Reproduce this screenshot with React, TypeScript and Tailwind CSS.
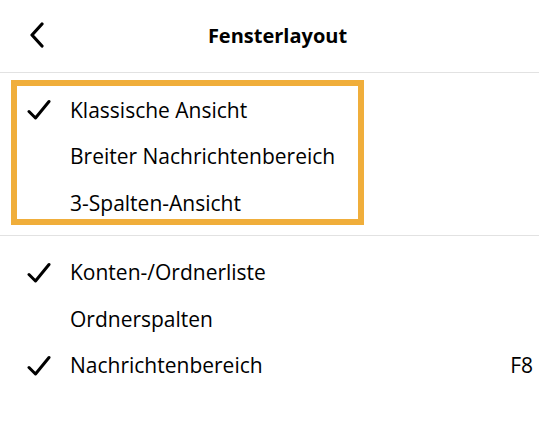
import React from "react";

const Check = () => (
  <svg width="24" height="24" viewBox="0 0 24 24" className="shrink-0">
    <path d="M2 13.5 L8.5 20 L22 3.5" fill="none" stroke="#000" strokeWidth="3" strokeLinecap="round" strokeLinejoin="round" />
  </svg>
);

function Item({ label, checked, shortcut }: { label: string; checked?: boolean; shortcut?: string }) {
  return (
    <div className="flex h-[46.5px] items-center pt-[2px]">
      <div className="flex w-[70px] justify-start pl-[27px]">{checked && <Check />}</div>
      <span className="flex-1">{label}</span>
      {shortcut && <span className="pr-[6px]">{shortcut}</span>}
    </div>
  );
}

export default function App() {
  return (
    <div className="h-[432px] w-[539px] bg-white text-[#000] text-[21px]" style={{ fontFamily: '"Open Sans", "Noto Sans", sans-serif' }}>
      {/* header */}
      <div className="relative flex h-[73px] items-center justify-center border-b border-[#e2e2e2]">
        <svg width="16" height="26" viewBox="0 0 16 26" className="absolute left-[29px] top-[22px]">
          <path d="M13 2 L3 13 L13 24" fill="none" stroke="#000" strokeWidth="3.2" strokeLinecap="round" strokeLinejoin="round" />
        </svg>
        <span className="ml-[16px] font-bold text-[20px]">Fensterlayout</span>
      </div>

      {/* layout options */}
      <div className="relative border-b border-[#e2e2e2] pt-[13px] pb-[9px]">
        <Item label="Klassische Ansicht" checked />
        <Item label="Breiter Nachrichtenbereich" />
        <Item label="3-Spalten-Ansicht" />
        <div className="pointer-events-none absolute left-[11px] top-[7px] h-[145px] w-[353px] border-[6px] border-[#f0ae3b]" />
      </div>

      {/* panes */}
      <div className="pt-[13px]">
        <Item label="Konten-/Ordnerliste" checked />
        <Item label="Ordnerspalten" />
        <Item label="Nachrichtenbereich" checked shortcut="F8" />
      </div>
    </div>
  );
}
